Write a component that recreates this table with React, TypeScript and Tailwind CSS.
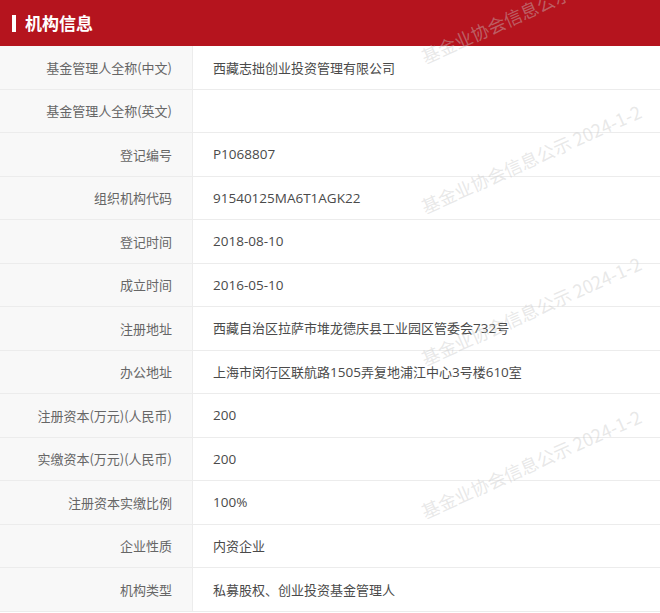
import React from "react";

type Row = { label: string; value: string };

const ROWS: Row[] = [
  { label: "基金管理人全称(中文)", value: "西藏志拙创业投资管理有限公司" },
  { label: "基金管理人全称(英文)", value: "" },
  { label: "登记编号", value: "P1068807" },
  { label: "组织机构代码", value: "91540125MA6T1AGK22" },
  { label: "登记时间", value: "2018-08-10" },
  { label: "成立时间", value: "2016-05-10" },
  { label: "注册地址", value: "西藏自治区拉萨市堆龙德庆县工业园区管委会732号" },
  { label: "办公地址", value: "上海市闵行区联航路1505弄复地浦江中心3号楼610室" },
  { label: "注册资本(万元)(人民币)", value: "200" },
  { label: "实缴资本(万元)(人民币)", value: "200" },
  { label: "注册资本实缴比例", value: "100%" },
  { label: "企业性质", value: "内资企业" },
  { label: "机构类型", value: "私募股权、创业投资基金管理人" },
];

const WATERMARK_TOPS = ["top-[46px]", "top-[196px]", "top-[348px]", "top-[501px]"];

const FONT = "font-['Noto_Sans_CJK_SC','Noto_Sans',sans-serif]";

// latin runs (digits, letters) come out wider in the source page, so give them Open Sans
function Mixed({ text }: { text: string }) {
  const parts = text.split(/([A-Za-z0-9%\-]+)/).filter(Boolean);
  return (
    <>
      {parts.map((part, i) =>
        /^[A-Za-z0-9%\-]+$/.test(part) ? (
          <span key={i} className="font-['Open_Sans',sans-serif] text-[13.5px]">
            {part}
          </span>
        ) : (
          <span key={i}>{part}</span>
        ),
      )}
    </>
  );
}

function InfoRow({ label, value }: Row) {
  return (
    <div className="flex h-[43.5px] border-b border-[#ececec]">
      <div className="flex w-[193px] shrink-0 items-center justify-end border-r border-[#ececec] bg-[#f8f8f8] pr-[20px] text-[13px] text-[#666]">
        {label}
      </div>
      <div className="flex flex-1 items-center pl-[20px] text-[13px] text-[#4a4a4a]">
        <span className="whitespace-pre">
          <Mixed text={value} />
        </span>
      </div>
    </div>
  );
}

export default function App() {
  return (
    <div className={`relative h-[613px] w-[660px] overflow-hidden bg-white ${FONT}`}>
      <div className="flex h-[46px] items-center bg-[#b5141e] pl-[12px]">
        <span className="h-[17px] w-[4px] bg-white" />
        <span className="ml-[9px] text-[17px] font-bold text-white">机构信息</span>
      </div>

      <div className="flex flex-col">
        {ROWS.map((row) => (
          <InfoRow key={row.label} {...row} />
        ))}
      </div>

      {WATERMARK_TOPS.map((top) => (
        <span
          key={top}
          className={`pointer-events-none absolute left-[426px] ${top} origin-bottom-left -rotate-[24deg] whitespace-nowrap text-[18px] leading-[20px] text-[rgba(200,200,200,0.42)]`}
        >
          基金业协会信息公示 2024-1-2
        </span>
      ))}
    </div>
  );
}
